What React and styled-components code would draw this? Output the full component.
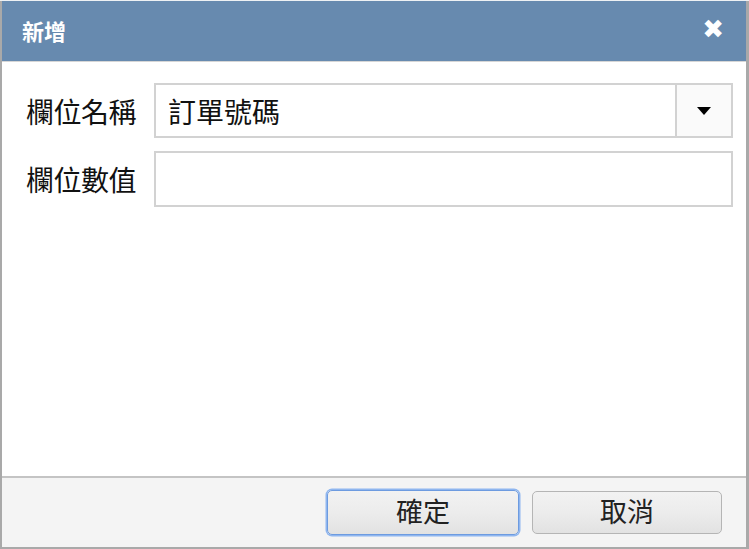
import React from "react";
import styled, { createGlobalStyle } from "styled-components";

const Global = createGlobalStyle`
  html, body { margin: 0; padding: 0; background: #eef1f4; }
  body { font-family: "Noto Sans CJK TC", "Noto Sans CJK SC", sans-serif; }
  * { box-sizing: border-box; }
`;

const Dialog = styled.div`
  width: 749px;
  margin-top: 1px;
  height: 548px;
  display: flex;
  flex-direction: column;
  background: #ffffff;
  border-left: 2px solid #a9a9a9;
  border-right: 3px solid #a9a9a9;
  border-bottom: 2px solid #a9a9a9;
`;

const Header = styled.div`
  height: 61px;
  flex: none;
  background: #678aaf;
  border-bottom: 1px solid #d6d6d6;
  display: flex;
  align-items: center;
  justify-content: space-between;
  padding: 0 22px 0 20px;
  color: #ffffff;
`;

const Title = styled.span`
  font-size: 22px;
  font-weight: 700;
  margin-top: -2px;
`;

const Close = styled.span`
  font-family: "DejaVu Sans", sans-serif;
  font-size: 26px;
  font-weight: 700;
  line-height: 1;
  margin-top: -4px;
`;

const Body = styled.div`
  flex: 1;
  display: grid;
  grid-template-columns: 114px 1fr;
  column-gap: 14px;
  row-gap: 13px;
  align-content: start;
  padding: 21px 13px 0 24px;
`;

const Label = styled.label`
  font-size: 28px;
  color: #111;
  display: flex;
  align-items: center;
  white-space: nowrap;
  letter-spacing: -0.5px;
`;

const Field = styled.div`
  height: ${(p) => p.$h}px;
  border: 2px solid #d2d2d2;
  background: #fff;
  display: flex;
  align-items: stretch;
`;

const FieldText = styled.div`
  flex: 1;
  display: flex;
  align-items: center;
  padding-left: 12px;
  font-size: 28px;
  color: #111;
`;

const DropButton = styled.div`
  width: 56px;
  flex: none;
  border-left: 2px solid #d2d2d2;
  background: #fafafa;
  display: flex;
  align-items: center;
  justify-content: center;
`;

const Footer = styled.div`
  height: 71px;
  flex: none;
  border-top: 2px solid #c4c4c4;
  background: #f4f4f4;
  display: flex;
  align-items: center;
  justify-content: flex-end;
  gap: 13px;
  padding-right: 24px;
`;

const Button = styled.button`
  width: ${(p) => (p.$focus ? 192 : 190)}px;
  height: ${(p) => (p.$focus ? 45 : 43)}px;
  border-radius: 5px;
  border: 1px solid ${(p) => (p.$focus ? "#6d9be0" : "#b5b5b5")};
  box-shadow: ${(p) => (p.$focus ? "0 0 0 1.5px #8fb6ef" : "none")};
  background: linear-gradient(#f2f2f2, #ececec 50%, #e2e2e2);
  font-family: "Noto Sans CJK TC", sans-serif;
  font-size: 27px;
  color: #222;
  display: flex;
  align-items: center;
  justify-content: center;
  padding: 0 0 5px 0;
`;

export default function App() {
  return (
    <>
      <Global />
      <Dialog>
        <Header>
          <Title>新增</Title>
          <Close>✖</Close>
        </Header>
        <Body>
          <Label>欄位名稱</Label>
          <Field $h={55}>
            <FieldText>訂單號碼</FieldText>
            <DropButton>
              <svg width="14" height="8" viewBox="0 0 14 8">
                <path d="M0 0 L14 0 L7 8 Z" fill="#000" />
              </svg>
            </DropButton>
          </Field>
          <Label>欄位數值</Label>
          <Field $h={56} />
        </Body>
        <Footer>
          <Button $focus>確定</Button>
          <Button>取消</Button>
        </Footer>
      </Dialog>
    </>
  );
}
